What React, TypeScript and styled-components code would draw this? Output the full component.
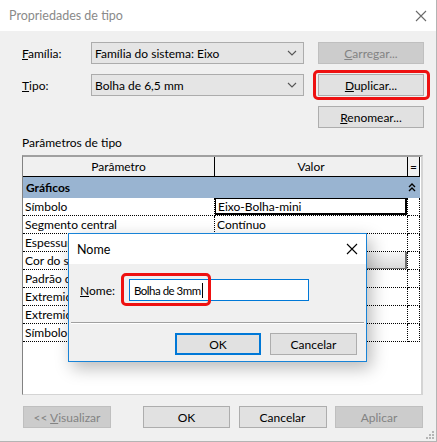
import React from "react";
import styled, { createGlobalStyle } from "styled-components";

const GlobalStyle = createGlobalStyle`
  html, body {
    margin: 0;
    padding: 0;
    background: #f0f0f0;
  }
  * {
    box-sizing: border-box;
  }
`;

const FONT = `"Segoe UI", Lato, "Noto Sans", sans-serif`;

const Window = styled.div`
  position: relative;
  width: 437px;
  height: 442px;
  overflow: hidden;
  background: #f0f0f0;
  border-right: 1px solid #b4b4b4;
  border-bottom: 1px solid #b4b4b4;
  font-family: ${FONT};
  font-size: 12px;
  color: #000;
  display: flex;
  flex-direction: column;
`;

const TitleBar = styled.div<{ $active?: boolean }>`
  height: ${(p) => (p.$active ? 30 : 31)}px;
  flex: none;
  background: #fff;
  display: flex;
  align-items: center;
  justify-content: space-between;
  padding: 0 ${(p) => (p.$active ? 8 : 9)}px;
  font-size: 12.5px;
  color: ${(p) => (p.$active ? "#000" : "#8a8a8a")};
`;

const Body = styled.div`
  flex: 1;
  display: flex;
  flex-direction: column;
  padding: 11px 12px 0 22px;
`;

const TopGrid = styled.div`
  display: grid;
  grid-template-columns: 55px 213px 106px;
  grid-template-rows: repeat(3, 22px);
  column-gap: 14px;
  row-gap: 10px;
  align-items: center;
`;

const Label = styled.span<{ $width?: number }>`
  flex: none;
  width: ${(p) => (p.$width ? `${p.$width}px` : "auto")};
`;

const Mn = styled.span`
  text-decoration: underline;
  text-underline-offset: 1px;
`;

const Combo = styled.div`
  height: 22px;
  background: #e5e5e5;
  border: 1px solid #acacac;
  display: flex;
  align-items: center;
  justify-content: space-between;
  padding: 0 6px 0 3px;
`;

const Button = styled.button<{ $primary?: boolean; $width?: number }>`
  height: 22px;
  width: ${(p) => p.$width ?? 88}px;
  background: ${(p) => (p.disabled ? "#cccccc" : "#e1e1e1")};
  border: ${(p) =>
    p.$primary ? "2px solid #0078d7" : p.disabled ? "1px solid #bfbfbf" : "1px solid #adadad"};
  color: ${(p) => (p.disabled ? "#838383" : "#000")};
  font-family: ${FONT};
  font-size: 12px;
  padding: 0;
  margin: 0;
  text-align: center;
  white-space: pre;
`;

const SectionLabel = styled.div`
  margin-top: 7px;
  height: 16px;
  line-height: 16px;
`;

const TableFrame = styled.div`
  margin-top: 4px;
  width: 401px;
  height: 240px;
  border-top: 2px solid #a0a0a0;
  border-left: 1px solid #828282;
  border-right: 2px solid #d4d4d4;
  border-bottom: 1px solid #d4d4d4;
  background: #fff;
  display: flex;
  flex-direction: column;
`;

const Row = styled.div`
  display: grid;
  grid-template-columns: 192px 193px 12px;
`;

const HeadCell = styled.div`
  height: 20px;
  background: #f0f0f0;
  border-bottom: 1px solid #000;
  border-right: 1px solid #000;
  display: flex;
  align-items: center;
  justify-content: center;
`;

const GroupRow = styled.div`
  height: 21px;
  background: #99b4d1;
  display: flex;
  align-items: center;
  justify-content: space-between;
  padding: 0 4px 0 3px;
  font-weight: bold;
  border-right: 1px solid #fff;
`;

const Cell = styled.div`
  height: 18px;
  border-bottom: 1px dotted #000;
  border-right: 1px dotted #000;
  padding: 0 2px;
  display: flex;
  align-items: center;
  white-space: nowrap;
  overflow: hidden;
`;

const EditBox = styled.div`
  width: calc(100% + 4px);
  height: 17px;
  margin: 0 -2px;
  padding: 0 2px;
  background: #fff;
  border: 1px solid #000;
  border-right-width: 2px;
  border-bottom-width: 2px;
  display: flex;
  align-items: center;
`;

const ValueButton = styled.div`
  width: calc(100% + 4px);
  height: 18px;
  margin: 0 -2px;
  background: linear-gradient(#f7f7f7, #dadada);
  border-right: 2px solid #6e6e6e;
  border-bottom: 2px solid #6e6e6e;
`;

const Footer = styled.div`
  margin-top: 11px;
  display: flex;
  justify-content: space-between;
  padding: 0 1px 0 1px;
`;

const ButtonGroup = styled.div`
  display: flex;
  gap: 8.5px;
`;

const Grip = styled.svg`
  position: absolute;
  right: 2px;
  bottom: 2px;
`;

const Highlight = styled.div<{ $x: number; $y: number; $w: number; $h: number }>`
  position: absolute;
  left: ${(p) => p.$x}px;
  top: ${(p) => p.$y}px;
  width: ${(p) => p.$w}px;
  height: ${(p) => p.$h}px;
  border: 3px solid #ee1111;
  border-radius: 5px;
  pointer-events: none;
`;

const Dialog = styled.div`
  position: absolute;
  left: 68px;
  top: 233px;
  width: 299px;
  height: 129px;
  border: 1px solid #1883d7;
  background: #f0f0f0;
  box-shadow: 4px 6px 16px rgba(0, 0, 0, 0.28);
  display: flex;
  flex-direction: column;
`;

const DialogBody = styled.div`
  flex: 1;
  display: flex;
  flex-direction: column;
  padding: 15px 2px 0 2px;
`;

const FieldRow = styled.div`
  display: flex;
  align-items: center;
  padding-left: 9px;
`;

const Input = styled.div`
  width: 180px;
  height: 22px;
  background: #fff;
  border: 1px solid #0078d7;
  display: flex;
  align-items: center;
  padding-left: 4px;
`;

const InputText = styled.span`
  white-space: nowrap;
  font-size: 11.5px;
  letter-spacing: -0.5px;
`;

const Caret = styled.span`
  display: inline-block;
  width: 1px;
  height: 15px;
  background: #000;
  margin-left: 1px;
`;

const Separator = styled.div`
  margin-top: 21px;
  height: 1px;
  background: #a0a0a0;
  box-shadow: 0 1px 0 #fff;
`;

const DialogButtons = styled.div`
  margin-top: 10px;
  display: flex;
  justify-content: flex-end;
  gap: 9px;
  padding-right: 7px;
`;

const Chevron = () => (
  <svg width="10" height="6" viewBox="0 0 10 6">
    <path d="M1 1 L5 5 L9 1" fill="none" stroke="#555" strokeWidth="1.1" />
  </svg>
);

const CloseX = ({ color }: { color: string }) => (
  <svg width="12" height="12" viewBox="0 0 12 12">
    <path d="M1 1 L11 11 M11 1 L1 11" stroke={color} strokeWidth="1.1" />
  </svg>
);

const Collapse = () => (
  <svg width="8" height="9" viewBox="0 0 8 9">
    <path d="M1 4 L4 1 L7 4 M1 8 L4 5 L7 8" fill="none" stroke="#000" strokeWidth="1.4" />
  </svg>
);

const rows: { name: string; value?: React.ReactNode }[] = [
  { name: "Símbolo", value: <EditBox>Eixo-Bolha-mini</EditBox> },
  { name: "Segmento central", value: "Contínuo" },
  { name: "Espessura do segmento central", value: "1" },
  { name: "Cor do segmento central", value: <ValueButton /> },
  { name: "Padrão do segmento central", value: "" },
  { name: "Extremidade 1 do segmento", value: "" },
  { name: "Extremidade 2 do segmento", value: "" },
  { name: "Símbolo da extremidade", value: "" },
];

export default function App() {
  return (
    <Window>
      <GlobalStyle />
      <TitleBar>
        <span>Propriedades de tipo</span>
        <CloseX color="#6a6a6a" />
      </TitleBar>
      <Body>
        <TopGrid>
          <Label>
            <Mn>F</Mn>amília:
          </Label>
          <Combo>
            <span>Família do sistema: Eixo</span>
            <Chevron />
          </Combo>
          <Button disabled $width={106}>
            <Mn>C</Mn>arregar...
          </Button>
          <Label>
            <Mn>T</Mn>ipo:
          </Label>
          <Combo>
            <span>Bolha de 6,5 mm</span>
            <Chevron />
          </Combo>
          <Button $width={106}>
            <Mn>D</Mn>uplicar...
          </Button>
          <span />
          <span />
          <Button $width={106}>
            <Mn>R</Mn>enomear...
          </Button>
        </TopGrid>
        <SectionLabel>Parâmetros de tipo</SectionLabel>
        <TableFrame>
          <Row>
            <HeadCell>Parâmetro</HeadCell>
            <HeadCell>Valor</HeadCell>
            <HeadCell>=</HeadCell>
          </Row>
          <GroupRow>
            <span>Gráficos</span>
            <Collapse />
          </GroupRow>
          {rows.map((r, i) => (
            <Row key={i}>
              <Cell>{r.name}</Cell>
              <Cell>{r.value}</Cell>
              <Cell />
            </Row>
          ))}
        </TableFrame>
        <Footer>
          <Button disabled $width={88}>
            {"<< "}
            <Mn>V</Mn>isualizar
          </Button>
          <ButtonGroup>
            <Button $width={87}>OK</Button>
            <Button $width={88}>Cancelar</Button>
            <Button disabled $width={88}>
              Aplicar
            </Button>
          </ButtonGroup>
        </Footer>
      </Body>
      <Grip width="10" height="10" viewBox="0 0 10 10">
        {[
          [8, 0],
          [8, 3],
          [5, 3],
          [8, 6],
          [5, 6],
          [2, 6],
        ].map(([x, y], i) => (
          <rect key={i} x={x} y={y + 2} width="2" height="2" fill="#b5b5b5" />
        ))}
      </Grip>
      <Highlight $x={313} $y={70} $w={117} $h={30} />
      <Dialog>
        <TitleBar $active>
          <span>Nome</span>
          <CloseX color="#000" />
        </TitleBar>
        <DialogBody>
          <FieldRow>
            <Label $width={49}>
              <Mn>N</Mn>ome:
            </Label>
            <Input>
              <InputText>Bolha de 3mm</InputText>
              <Caret />
            </Input>
          </FieldRow>
          <Separator />
          <DialogButtons>
            <Button $primary $width={86}>
              OK
            </Button>
            <Button $width={87}>Cancelar</Button>
          </DialogButtons>
        </DialogBody>
      </Dialog>
      <Highlight $x={121} $y={273} $w={90} $h={33} />
    </Window>
  );
}
